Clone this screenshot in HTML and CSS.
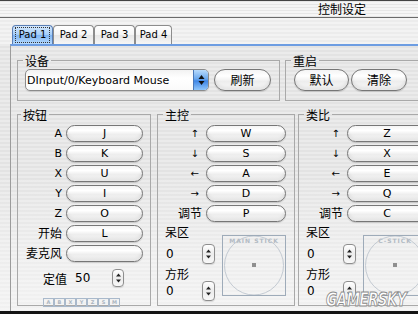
FILE: index.html
```html
<!DOCTYPE html>
<html lang="zh">
  <head>
    <meta charset="UTF-8" />
    <meta name="viewport" content="width=device-width, initial-scale=1.0" />
    <title>控制设定</title>
    <link rel="stylesheet" href="styles.css">
  </head>
  <body>
    <div class="window">
      <div class="titlebar">控制设定</div>

      <div class="tabbar">
        <div class="tab active"><span class="focus">Pad 1</span></div>
        <div class="tab">Pad 2</div>
        <div class="tab">Pad 3</div>
        <div class="tab tab-last">Pad 4</div>
      </div>

      <div class="panel">
        <div class="top-row">
          <fieldset class="group device">
            <legend>设备</legend>
            <div class="group-body">
              <div class="select">
                <span class="select-text">DInput/0/Keyboard Mouse</span>
                <span class="select-arrows">
                  <svg width="7" height="12" viewBox="0 0 7 12"><path d="M0.5 5L3.5 1L6.5 5Z M0.5 7L3.5 11L6.5 7Z" fill="#111"/></svg>
                </span>
              </div>
              <button class="btn btn-large">刷新</button>
            </div>
          </fieldset>

          <fieldset class="group restart">
            <legend>重启</legend>
            <div class="group-body">
              <button class="btn btn-large">默认</button>
              <button class="btn btn-large btn-wide">清除</button>
            </div>
          </fieldset>
        </div>

        <div class="bottom-row">
          <fieldset class="group buttons">
            <legend class="legend-tight">按钮</legend>
            <div class="map">
              <span class="key">A</span><button class="btn key-btn">J</button>
              <span class="key">B</span><button class="btn key-btn">K</button>
              <span class="key">X</span><button class="btn key-btn">U</button>
              <span class="key">Y</span><button class="btn key-btn">I</button>
              <span class="key">Z</span><button class="btn key-btn">O</button>
              <span class="key cn">开始</span><button class="btn key-btn">L</button>
              <span class="key cn">麦克风</span><button class="btn key-btn"></button>
            </div>
            <div class="threshold">
              <span class="cn">定值</span>
              <span class="threshold-value">50</span>
              <span class="spin spin-small">
                <svg width="7" height="12" viewBox="0 0 7 12"><path d="M1 4.5L3.5 1.5L6 4.5Z M1 7.5L3.5 10.5L6 7.5Z" fill="#222"/></svg>
              </span>
            </div>
            <div class="icons">
              <span>A</span><span>B</span><span>X</span><span>Y</span><span>Z</span><span>S</span><span>M</span>
            </div>
          </fieldset>

          <fieldset class="group stick main-stick">
            <legend>主控</legend>
            <div class="map">
              <span class="key arrow">↑</span><button class="btn key-btn">W</button>
              <span class="key arrow">↓</span><button class="btn key-btn">S</button>
              <span class="key arrow">←</span><button class="btn key-btn">A</button>
              <span class="key arrow">→</span><button class="btn key-btn">D</button>
              <span class="key cn">调节</span><button class="btn key-btn">P</button>
            </div>
            <div class="stick-area">
              <div class="dz">
                <div class="dz-label cn">呆区</div>
                <div class="dz-row">
                  <span>0</span>
                  <span class="spin">
                    <svg width="7" height="14" viewBox="0 0 7 14"><path d="M1 5.5L3.5 2.5L6 5.5Z M1 8.5L3.5 11.5L6 8.5Z" fill="#222"/></svg>
                  </span>
                </div>
                <div class="dz-label dz-label-2 cn">方形</div>
                <div class="dz-row dz-row-2">
                  <span>0</span>
                  <span class="spin">
                    <svg width="7" height="14" viewBox="0 0 7 14"><path d="M1 5.5L3.5 2.5L6 5.5Z M1 8.5L3.5 11.5L6 8.5Z" fill="#222"/></svg>
                  </span>
                </div>
              </div>
              <div class="stick-box">
                <svg width="62" height="59" viewBox="0 0 62 59">
                  <circle cx="31" cy="29.5" r="29.5" fill="none" stroke="#c3cad2" stroke-width="1"/>
                  <rect x="29" y="27" width="4" height="4" fill="#8f8f8f"/>
                </svg>
                <span class="stick-name">MAIN STICK</span>
              </div>
            </div>
          </fieldset>

          <fieldset class="group stick c-stick">
            <legend>类比</legend>
            <div class="map">
              <span class="key arrow">↑</span><button class="btn key-btn">Z</button>
              <span class="key arrow">↓</span><button class="btn key-btn">X</button>
              <span class="key arrow">←</span><button class="btn key-btn">E</button>
              <span class="key arrow">→</span><button class="btn key-btn">Q</button>
              <span class="key cn">调节</span><button class="btn key-btn">C</button>
            </div>
            <div class="stick-area">
              <div class="dz">
                <div class="dz-label cn">呆区</div>
                <div class="dz-row">
                  <span>0</span>
                  <span class="spin">
                    <svg width="7" height="14" viewBox="0 0 7 14"><path d="M1 5.5L3.5 2.5L6 5.5Z M1 8.5L3.5 11.5L6 8.5Z" fill="#222"/></svg>
                  </span>
                </div>
                <div class="dz-label dz-label-2 cn">方形</div>
                <div class="dz-row dz-row-2">
                  <span>0</span>
                  <span class="spin">
                    <svg width="7" height="14" viewBox="0 0 7 14"><path d="M1 5.5L3.5 2.5L6 5.5Z M1 8.5L3.5 11.5L6 8.5Z" fill="#222"/></svg>
                  </span>
                </div>
              </div>
              <div class="stick-box">
                <svg width="62" height="59" viewBox="0 0 62 59">
                  <circle cx="31" cy="29.5" r="29.5" fill="none" stroke="#c3cad2" stroke-width="1"/>
                  <rect x="29" y="27" width="4" height="4" fill="#8f8f8f"/>
                </svg>
                <span class="stick-name">C-STICK</span>
              </div>
            </div>
          </fieldset>
        </div>
      </div>

      <div class="watermark">GAMERSKY</div>
    </div>
  </body>
</html>
```

FILE: styles.css
```css
* {
  box-sizing: border-box;
}

body {
  margin: 0;
  font-family: "DejaVu Sans", "Noto Sans CJK SC", sans-serif;
  font-size: 11px;
  color: #000;
}

.cn {
  font-family: "Noto Sans CJK SC", sans-serif;
  font-size: 12px;
}

.window {
  position: relative;
  width: 418px;
  height: 314px;
  overflow: hidden;
  border-bottom: 3px solid #141414;
  background:
    linear-gradient(to bottom, rgba(255, 255, 255, 0) 0, rgba(255, 255, 255, 0) 175px, rgba(255, 255, 255, 0.35) 250px, rgba(255, 255, 255, 0.5) 311px),
    repeating-linear-gradient(to bottom, #ebebeb 0, #ebebeb 2px, #e3e3e3 2px, #e3e3e3 4px);
}

/* Title bar */
.titlebar {
  height: 18px;
  padding-left: 318px;
  border-top: 1px solid #444;
  border-bottom: 1px solid #6a6a6a;
  font-family: "Noto Sans CJK SC", sans-serif;
  font-size: 12px;
  line-height: 15px;
  background: repeating-linear-gradient(to bottom, #e6e6e6 0, #e6e6e6 1px, #f5f5f5 1px, #f5f5f5 3px);
}

/* Tabs */
.tabbar {
  display: flex;
  align-items: flex-end;
  height: 26px;
  padding-left: 12px;
  background: repeating-linear-gradient(to bottom, #f3f3f3 0, #f3f3f3 2px, #ececec 2px, #ececec 4px);
}

.tab {
  width: 41px;
  height: 19px;
  border: 1px solid #8c8c8c;
  border-bottom: none;
  border-radius: 4px 4px 0 0;
  background: linear-gradient(to bottom, #ffffff, #f4f4f4 50%, #e6e6e6 51%, #f6f6f6);
  font-size: 10px;
  line-height: 18px;
  text-align: center;
}

.tab-last {
  width: 37px;
}

.tab.active {
  border-color: #5b7fb5;
  background: linear-gradient(to bottom, #d4e8fd, #a2ccf8 50%, #7fb5f3 51%, #b7dafd);
  padding: 1px 2px;
  line-height: 14px;
}

.tab .focus {
  display: block;
  height: 16px;
  border: 1px dotted #333;
}

.panel {
  height: 267px;
  margin-left: 10px;
  padding: 8px 0 0 6px;
  border-left: 1px solid #9c9c9c;
  border-top: 2px solid #6d9de2;
}

/* Group boxes */
.group {
  margin: 0;
  padding: 0;
  min-width: 0;
  border: 1px solid #a9a9a9;
}

.group legend {
  margin-left: 5px;
  padding: 0 2px;
  font-family: "Noto Sans CJK SC", sans-serif;
  font-size: 12px;
  line-height: 13px;
}

.group .legend-tight {
  margin-left: 3px;
}

.top-row {
  display: flex;
  gap: 5px;
}

.device {
  width: 263px;
  flex-shrink: 0;
}

.restart {
  width: 150px;
  flex-shrink: 0;
}

.group-body {
  display: flex;
  gap: 5px;
  padding: 2px 8px 9px 7px;
}

.restart .group-body {
  gap: 2px;
  padding-left: 8px;
}

/* Aqua buttons */
.btn {
  padding: 0;
  border: 1px solid #767676;
  color: #000;
  background: linear-gradient(to bottom, #f4f4f4 0%, #ffffff 30%, #ededed 58%, #f9f9f9 100%);
  box-shadow: inset 0 -3px 3px rgba(0, 0, 0, 0.07), 0 1px 1px rgba(0, 0, 0, 0.15);
  font-family: "DejaVu Sans", sans-serif;
  cursor: pointer;
}

.btn-large {
  width: 57px;
  height: 22px;
  border-radius: 11px;
  font-family: "Noto Sans CJK SC", sans-serif;
  font-size: 12px;
  line-height: 20px;
}

.restart .btn-large {
  width: 55px;
}

.restart .btn-wide {
  width: 56px;
}

.select {
  display: flex;
  align-items: center;
  width: 184px;
  height: 22px;
  overflow: hidden;
  border: 1px solid #8b8b8b;
  border-radius: 5px;
  background: linear-gradient(to bottom, #f2f2f2, #ffffff 40%, #fafafa);
  box-shadow: 0 1px 1px rgba(0, 0, 0, 0.12);
}

.select-text {
  flex: 1;
  padding-left: 1px;
  font-size: 11px;
  white-space: nowrap;
}

.select-arrows {
  display: flex;
  align-items: center;
  justify-content: center;
  width: 15px;
  height: 100%;
  border-left: 1px solid #4a78b8;
  background: linear-gradient(to bottom, #b8dafb, #6aa8ee 45%, #3f86e6 55%, #8fc6fb);
}

.bottom-row {
  display: flex;
  margin-top: 7px;
}

.buttons {
  width: 134px;
  height: 198px;
  flex-shrink: 0;
}

.main-stick {
  width: 138px;
  height: 198px;
  margin-left: 6px;
  flex-shrink: 0;
}

.c-stick {
  width: 150px;
  height: 198px;
  margin-left: 3px;
  flex-shrink: 0;
}

.map {
  display: grid;
  grid-template-columns: 44px 1fr;
  grid-auto-rows: 17px;
  column-gap: 4px;
  row-gap: 3px;
  padding: 4px 8px 0 0;
}

.buttons .map {
  padding-right: 7px;
}

.c-stick .map {
  grid-template-columns: 44px 80px;
}

.key {
  text-align: right;
  line-height: 17px;
}

.key.arrow {
  padding-right: 3px;
  font-size: 10px;
}

.key.cn {
  line-height: 16px;
}

.key-btn {
  height: 17px;
  border-radius: 9px;
  font-size: 11px;
  line-height: 15px;
}

/* Spinners */
.spin {
  display: flex;
  align-items: center;
  justify-content: center;
  width: 13px;
  height: 20px;
  border: 1px solid #8e8e8e;
  border-radius: 4px;
  background: linear-gradient(to bottom, #ffffff, #ececec 50%, #f8f8f8);
  box-shadow: 0 1px 1px rgba(0, 0, 0, 0.12);
}

.spin-small {
  width: 12px;
  height: 18px;
}

.threshold {
  display: flex;
  align-items: center;
  height: 18px;
  margin-top: 7px;
  padding-left: 25px;
}

.threshold-value {
  margin-left: 8px;
  font-size: 12px;
}

.threshold .spin {
  margin-left: 22px;
}

.icons {
  display: flex;
  margin-top: 11px;
  padding-left: 25px;
}

.icons span {
  width: 11px;
  height: 9px;
  border: 1px solid #a9b9cb;
  color: #aab4c0;
  font-size: 5px;
  font-weight: bold;
  line-height: 7px;
  text-align: center;
}

/* Stick panels */
.stick-area {
  display: flex;
  margin-top: 3px;
  padding-left: 7px;
}

.dz {
  width: 50px;
  flex-shrink: 0;
}

.dz-label {
  height: 14px;
  line-height: 14px;
}

.dz-label-2 {
  margin-top: 3px;
}

.dz-row {
  display: flex;
  align-items: center;
  justify-content: space-between;
  height: 21px;
  margin-top: 4px;
  padding-left: 1px;
  font-size: 12px;
}

.dz-row-2 {
  height: 20px;
  margin-top: 0;
}

.stick-box {
  position: relative;
  display: flex;
  align-items: center;
  justify-content: center;
  width: 64px;
  height: 61px;
  margin: 10px 0 0 7px;
  border: 1px solid #9eabb9;
  flex-shrink: 0;
}

.stick-name {
  position: absolute;
  top: 1px;
  left: 0;
  right: 0;
  color: #b2bac3;
  font-size: 6px;
  font-weight: bold;
  letter-spacing: 1px;
  text-align: center;
}

.watermark {
  position: absolute;
  left: 326px;
  top: 288px;
  color: #fff;
  font-family: "DejaVu Sans", sans-serif;
  font-size: 19px;
  font-weight: bold;
  font-style: italic;
  letter-spacing: -1px;
  -webkit-text-stroke: 1px #8a8a8a;
  transform: scaleX(0.72);
  transform-origin: left top;
}
```
